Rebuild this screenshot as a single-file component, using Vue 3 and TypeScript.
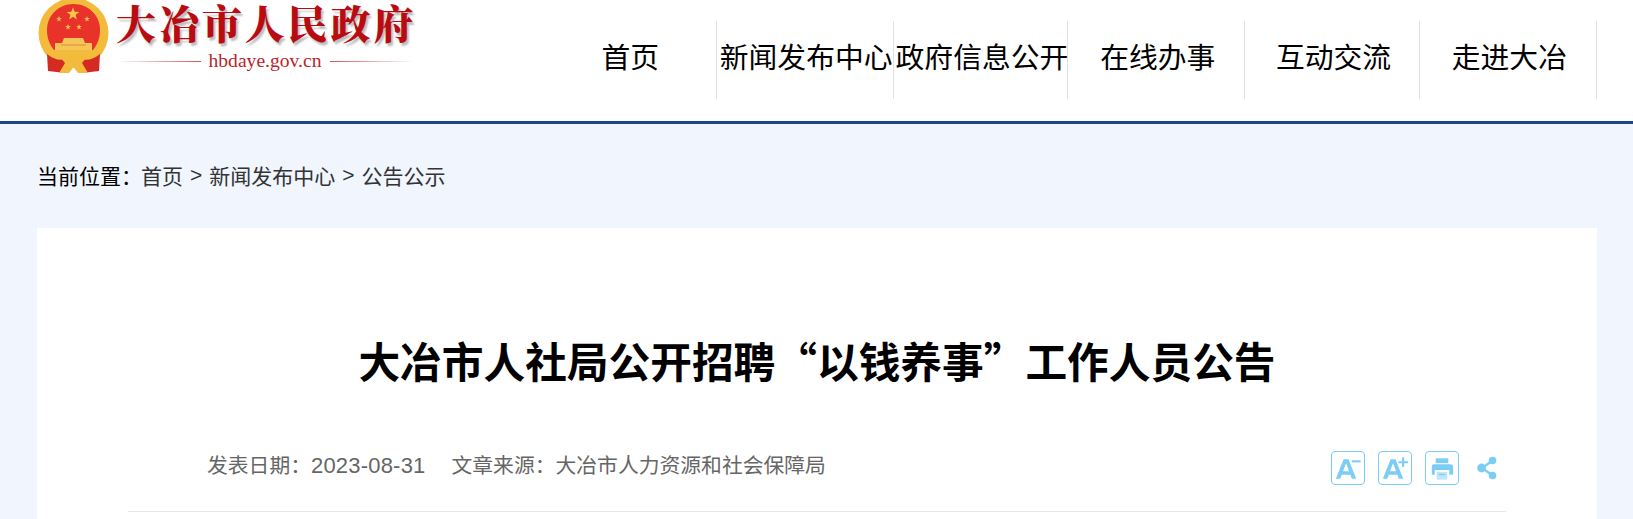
<script setup lang="ts">
const navItems = ['首页', '新闻发布中心', '政府信息公开', '在线办事', '互动交流', '走进大冶']
const starPoints = '0,-5 1.2,-1.6 4.8,-1.5 1.9,0.6 2.9,4 0,2 -2.9,4 -1.9,0.6 -4.8,-1.5 -1.2,-1.6'
const stars = [
  { x: 35, y: 17, s: 1.35 },
  { x: 21, y: 22, s: 0.6 },
  { x: 49, y: 22, s: 0.6 },
  { x: 30, y: 30, s: 0.6 },
  { x: 41, y: 30, s: 0.6 },
]
</script>

<template>
  <div class="page">
    <header class="header">
      <div class="header-inner">
        <div class="logo">
          <svg class="emblem" viewBox="0 0 72 78" width="72" height="78">
            <circle cx="35.5" cy="36" r="35" fill="#f3bb3c" />
            <path d="M35.5 7 C50 7 62 18 62 33 C62 42 59 48 55 53 H16 C12 48 9 42 9 33 C9 18 21 7 35.5 7 Z" fill="#e9322a" />
            <g v-for="(star, i) in stars" :key="i" :transform="`translate(${star.x} ${star.y}) scale(${star.s})`">
              <polygon :points="starPoints" fill="#f7c64a" />
            </g>
            <path d="M26 41 H45 L47 46 H54 V53 H17 V46 H24 Z" fill="#f6c558" />
            <path d="M23 47 H48 V49 H23 Z" fill="#e9a84a" />
            <path d="M12 53 H59 L57 59 Q35.5 64 14 59 Z" fill="#f3bb3c" />
            <path d="M9 57 Q20 66 30 61 L27 76 L10 74 Z" fill="#d42a22" />
            <path d="M62 57 Q51 66 41 61 L44 76 L61 74 Z" fill="#d42a22" />
            <path d="M22 60 Q35.5 54 49 60 L44 66 L50 76 H40 L35.5 70 L31 76 H21 L27 66 Z" fill="#f3bb3c" />
          </svg>
          <div class="logo-text">
            <div class="logo-title">大冶市人民政府</div>
            <div class="logo-domain">
              <span class="rule rule-left"></span>
              <span class="domain">hbdaye.gov.cn</span>
              <span class="rule rule-right"></span>
            </div>
          </div>
        </div>
        <nav class="nav">
          <a v-for="item in navItems" :key="item" class="nav-item">{{ item }}</a>
        </nav>
      </div>
    </header>

    <main class="main">
      <div class="crumbs">
        <span class="crumb-label">当前位置：</span>
        <a>首页</a>
        <span class="crumb-sep">&gt;</span>
        <a>新闻发布中心</a>
        <span class="crumb-sep">&gt;</span>
        <a>公告公示</a>
      </div>

      <article class="card">
        <h1 class="title">大冶市人社局公开招聘“以钱养事”工作人员公告</h1>
        <div class="meta">
          <div class="meta-text">
            <span>发表日期：<span class="date">2023-08-31</span></span>
            <span>文章来源：大冶市人力资源和社会保障局</span>
          </div>
          <div class="tools">
            <button class="tool">
              <svg viewBox="0 0 33 33" width="33" height="33">
                <path d="M4 27 L12 7 H17 L25 27 H20.4 L19 23 H10 L8.6 27 Z M11.4 19.4 H17.6 L14.5 11 Z" fill="#7ccdf6" fill-rule="evenodd" />
                <rect x="20.5" y="8" width="9" height="2.2" fill="#7ccdf6" />
              </svg>
            </button>
            <button class="tool">
              <svg viewBox="0 0 33 33" width="33" height="33">
                <path d="M4 27 L12 7 H17 L25 27 H20.4 L19 23 H10 L8.6 27 Z M11.4 19.4 H17.6 L14.5 11 Z" fill="#7ccdf6" fill-rule="evenodd" />
                <path d="M23.8 5 H26 V9 H30 V11.2 H26 V15 H23.8 V11.2 H20 V9 H23.8 Z" fill="#7ccdf6" />
              </svg>
            </button>
            <button class="tool">
              <svg viewBox="0 0 33 33" width="33" height="33">
                <path d="M10 6 H23 V11 H10 Z" fill="#7ccdf6" />
                <path d="M8 12 H25 Q28 12 28 15 V23 H24 V18 H9 V23 H6 V15 Q6 12 8 12 Z" fill="#7ccdf6" />
                <rect x="11" y="20" width="11" height="8" fill="#bfe6fb" />
                <rect x="13" y="22" width="7" height="1.4" fill="#7ccdf6" />
              </svg>
            </button>
            <button class="share">
              <svg viewBox="0 0 20 24" width="20" height="24">
                <path d="M15 5 L5 12 L15 19" fill="none" stroke="#7ccdf6" stroke-width="2.4" />
                <circle cx="15.5" cy="4.5" r="3.8" fill="#7ccdf6" />
                <circle cx="4.6" cy="12" r="4.4" fill="#7ccdf6" />
                <circle cx="15.5" cy="19.5" r="3.8" fill="#7ccdf6" />
              </svg>
            </button>
          </div>
        </div>
      </article>
    </main>
  </div>
</template>

<style scoped>
.page {
  height: 519px;
  overflow: hidden;
  background: #f0f5fe;
  font-family: "Noto Sans CJK SC", "Liberation Sans", sans-serif;
}

.header {
  height: 121px;
  background: #fff;
  border-bottom: 3px solid #1d4589;
}

.header-inner {
  width: 1560px;
  margin-left: 37px;
  display: flex;
  justify-content: space-between;
}

.logo {
  display: flex;
  gap: 6px;
  height: 75px;
}

.emblem {
  flex: none;
  margin: -3px 0 0 1px;
}

.logo-text {
  width: 298px;
  padding-top: 1px;
}

.logo-title {
  font-family: "Noto Serif CJK SC", "Noto Sans CJK SC", serif;
  font-size: 40px;
  font-weight: 900;
  line-height: 42px;
  letter-spacing: 2.9px;
  color: #b90c12;
  text-shadow: 2px 3px 2px #bdbdbd;
  white-space: nowrap;
}

.logo-domain {
  display: flex;
  align-items: center;
  gap: 8px;
  margin-top: 6px;
}

.domain {
  font-family: "Liberation Serif", serif;
  font-size: 19.6px;
  line-height: 24px;
  color: #b9252b;
}

.rule {
  flex: 1;
  height: 1px;
}

.rule-left {
  background: linear-gradient(to right, #fff, #d8555a);
}

.rule-right {
  background: linear-gradient(to right, #d8555a, #fff);
}

.nav {
  display: flex;
  margin-top: 21px;
  height: 78px;
}

.nav-item {
  width: 174.3px;
  box-sizing: border-box;
  padding: 0 0 10px 3px;
  display: flex;
  align-items: center;
  justify-content: center;
  border-right: 1px solid #e2e2e2;
  font-size: 28.8px;
  color: #000;
  white-space: nowrap;
}

.nav-item:nth-child(even) {
  width: 177.3px;
}

.crumbs {
  height: 104px;
  padding-left: 37px;
  padding-bottom: 2px;
  box-sizing: border-box;
  display: flex;
  align-items: center;
  font-size: 21px;
  color: #333;
}

.crumb-label {
  color: #000;
  margin-right: -1px;
}

.crumb-sep {
  margin: 0 7px;
  font-family: "Liberation Sans", sans-serif;
}

.card {
  width: 1560px;
  margin-left: 37px;
  box-sizing: border-box;
  padding: 105px 91px 0;
  background: #fff;
  min-height: 300px;
}

.title {
  margin: 0;
  text-align: center;
  font-size: 41.7px;
  line-height: 54px;
  font-weight: 700;
  color: #000;
}

.meta {
  margin-top: 62px;
  padding: 0 9px 24px 79px;
  display: flex;
  justify-content: space-between;
  align-items: center;
  border-bottom: 1px solid #e6e6e6;
}

.meta-text {
  display: flex;
  gap: 26px;
  margin-bottom: 8px;
  font-size: 20.8px;
  color: #666;
}

.date {
  font-family: "Liberation Sans", sans-serif;
  font-size: 22px;
  letter-spacing: 0.2px;
}

.tools {
  display: flex;
  align-items: center;
  gap: 13px;
}

.tool {
  width: 34px;
  height: 34px;
  padding: 0;
  box-sizing: border-box;
  background: #fff;
  border: 1.5px solid #7ccdf6;
  border-radius: 4px;
  display: flex;
  align-items: center;
  justify-content: center;
}

.share {
  width: 20px;
  height: 24px;
  padding: 0;
  border: none;
  background: none;
  margin-left: 5px;
}
</style>

<style>
html,
body {
  margin: 0;
  overflow: hidden;
}
</style>
